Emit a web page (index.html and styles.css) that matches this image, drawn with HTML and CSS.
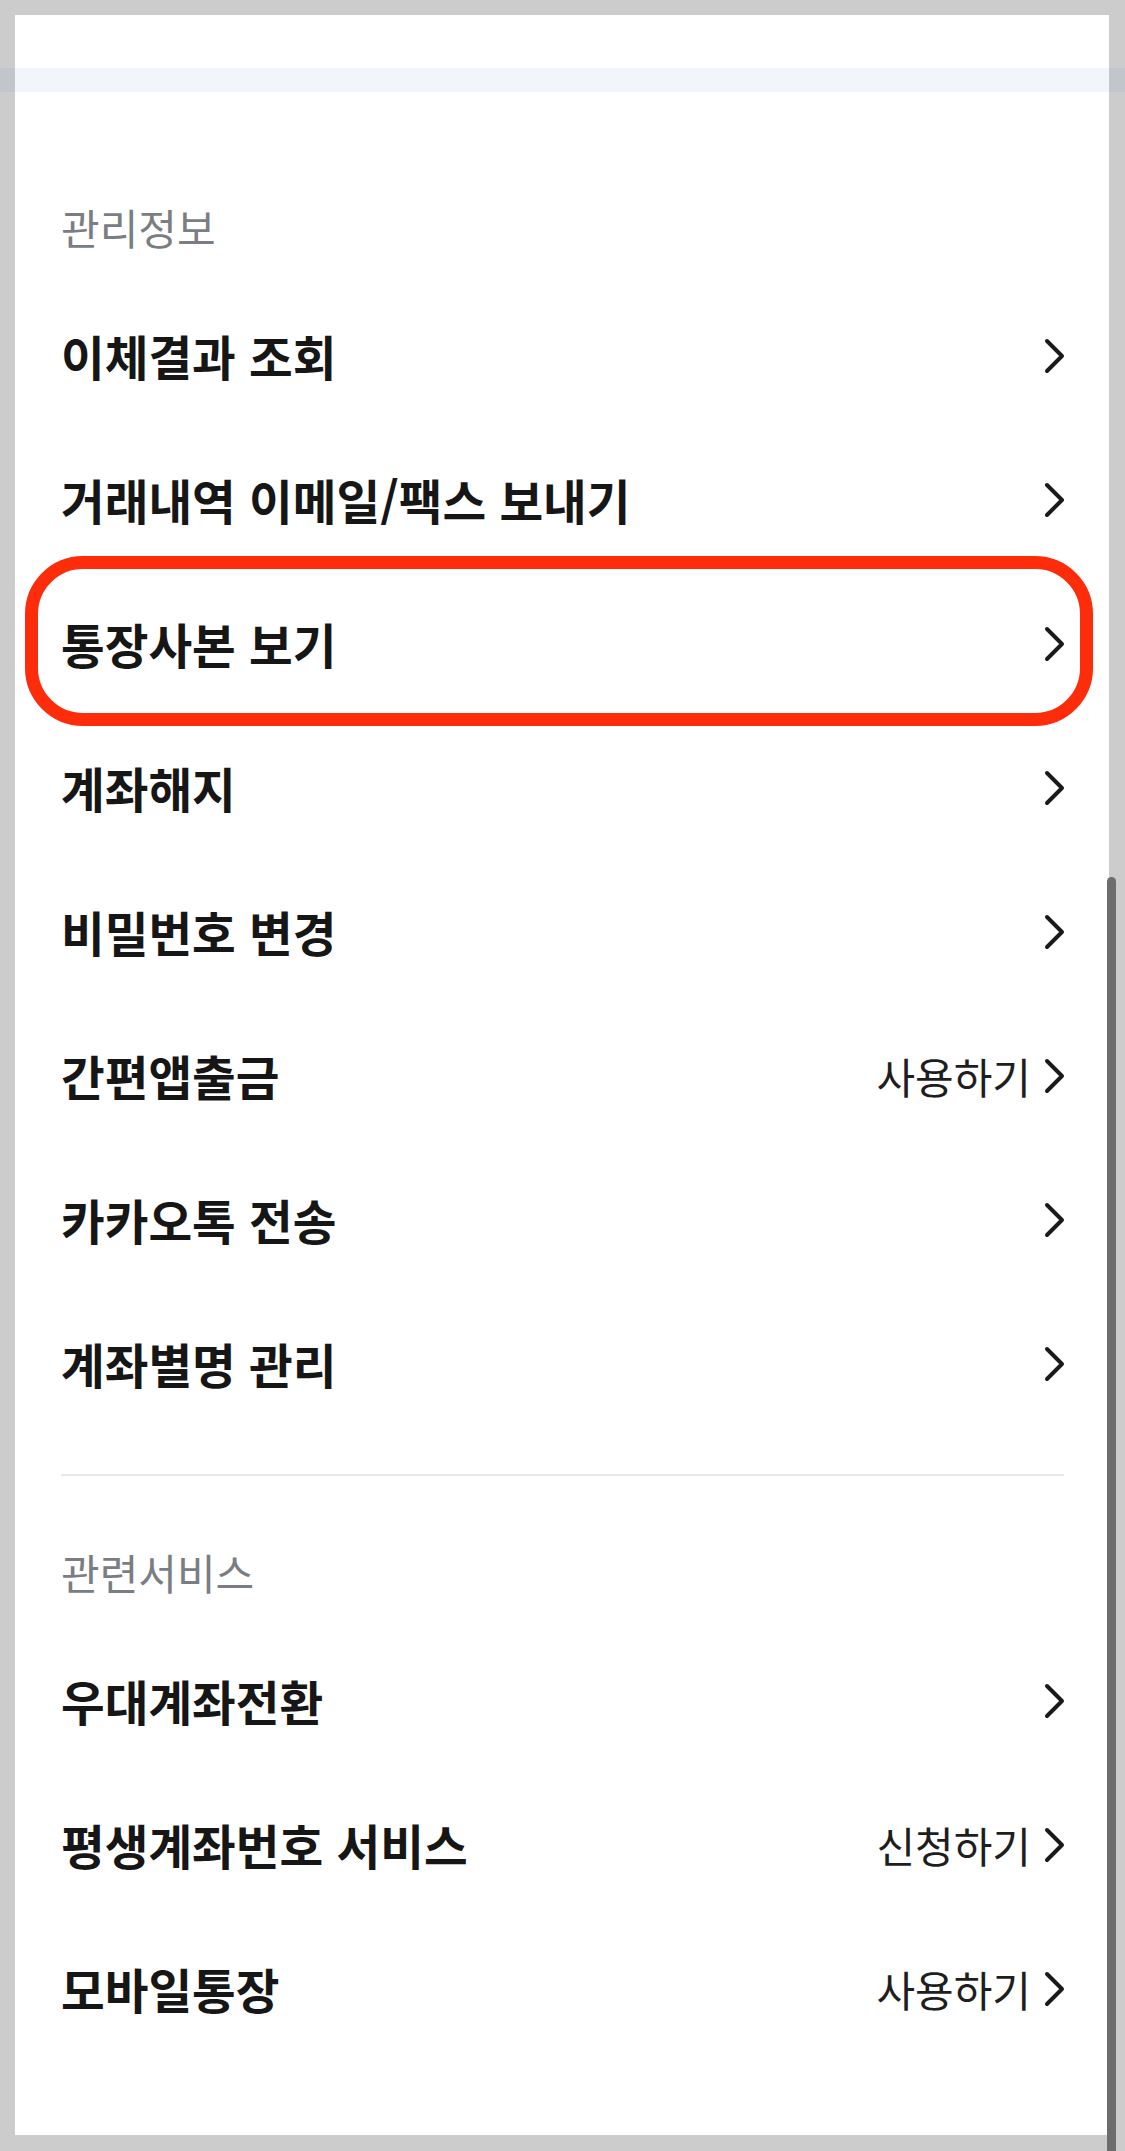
FILE: index.html
```html
<!DOCTYPE html>
<html lang="ko">
<head>
    <meta charset="UTF-8">
    <title>계좌 관리</title>
    <link rel="stylesheet" href="styles.css">
</head>
<body>
<div class="topShade"></div>
<div class="panel">
    <div class="section">
        <h3 class="sectionTitle">관리정보</h3>
        <ul class="menuList">
            <li class="menuItem"><span class="menuName">이체결과 조회</span><span class="menuSide"><svg class="arrow" viewBox="0 0 24 36"><path d="M4 3 L19 18 L4 33"/></svg></span></li>
            <li class="menuItem"><span class="menuName">거래내역 이메일/팩스 보내기</span><span class="menuSide"><svg class="arrow" viewBox="0 0 24 36"><path d="M4 3 L19 18 L4 33"/></svg></span></li>
            <li class="menuItem marked"><span class="menuName">통장사본 보기</span><span class="menuSide"><svg class="arrow" viewBox="0 0 24 36"><path d="M4 3 L19 18 L4 33"/></svg></span></li>
            <li class="menuItem"><span class="menuName">계좌해지</span><span class="menuSide"><svg class="arrow" viewBox="0 0 24 36"><path d="M4 3 L19 18 L4 33"/></svg></span></li>
            <li class="menuItem"><span class="menuName">비밀번호 변경</span><span class="menuSide"><svg class="arrow" viewBox="0 0 24 36"><path d="M4 3 L19 18 L4 33"/></svg></span></li>
            <li class="menuItem"><span class="menuName">간편앱출금</span><span class="menuSide">사용하기<svg class="arrow" viewBox="0 0 24 36"><path d="M4 3 L19 18 L4 33"/></svg></span></li>
            <li class="menuItem"><span class="menuName">카카오톡 전송</span><span class="menuSide"><svg class="arrow" viewBox="0 0 24 36"><path d="M4 3 L19 18 L4 33"/></svg></span></li>
            <li class="menuItem"><span class="menuName">계좌별명 관리</span><span class="menuSide"><svg class="arrow" viewBox="0 0 24 36"><path d="M4 3 L19 18 L4 33"/></svg></span></li>
        </ul>
    </div>
    <div class="divider"></div>
    <div class="section">
        <h3 class="sectionTitle">관련서비스</h3>
        <ul class="menuList">
            <li class="menuItem"><span class="menuName">우대계좌전환</span><span class="menuSide"><svg class="arrow" viewBox="0 0 24 36"><path d="M4 3 L19 18 L4 33"/></svg></span></li>
            <li class="menuItem"><span class="menuName">평생계좌번호 서비스</span><span class="menuSide">신청하기<svg class="arrow" viewBox="0 0 24 36"><path d="M4 3 L19 18 L4 33"/></svg></span></li>
            <li class="menuItem"><span class="menuName">모바일통장</span><span class="menuSide">사용하기<svg class="arrow" viewBox="0 0 24 36"><path d="M4 3 L19 18 L4 33"/></svg></span></li>
        </ul>
    </div>
</div>
<div class="scrollBar"></div>
</body>
</html>
```

FILE: styles.css
```css
*{
    margin: 0;
    padding: 0;
    box-sizing: border-box;
}
body{
    position: relative;
    background-color: #cccccc;
    padding: 15px 16px 16px 15px;
    font-family: "Noto Sans CJK KR", "Noto Sans", sans-serif;
    color: #161616;
}
.topShade{
    position: absolute;
    left: 0;
    right: 0;
    top: 68px;
    height: 24px;
    background-color: rgba(40, 80, 160, 0.06);
    z-index: 2;
}
.panel{
    background-color: #ffffff;
    height: 2120px;
    padding: 182px 45px 0 46px;
}
.sectionTitle{
    height: 60px;
    line-height: 60px;
    font-size: 42px;
    font-weight: normal;
    color: #7a7d82;
    margin-bottom: 27px;
}
ul.menuList{
    list-style: none;
}
.menuItem{
    position: relative;
    height: 144px;
    display: flex;
    align-items: center;
    justify-content: space-between;
}
.menuName{
    font-size: 47.5px;
    font-weight: bold;
    line-height: 1;
}
.menuSide{
    display: flex;
    align-items: center;
    font-size: 42px;
    line-height: 1;
    color: #1e1e1e;
}
.arrow{
    width: 24px;
    height: 36px;
    margin-left: 12px;
    margin-right: -3px;
}
.arrow path{
    fill: none;
    stroke: #1a1a1a;
    stroke-width: 4;
    stroke-linecap: round;
    stroke-linejoin: round;
}
.menuItem.marked::before{
    content: "";
    position: absolute;
    top: -16px;
    bottom: -10px;
    left: -36px;
    right: -29px;
    border: 13px solid #fd2c0b;
    border-radius: 58px;
}
.divider{
    height: 2px;
    background-color: #e8e8e8;
    margin: 38px 0 66px;
}
.scrollBar{
    position: absolute;
    left: 1107px;
    width: 9px;
    top: 877px;
    bottom: 0;
    background-color: #6d6d6d;
    border-radius: 5px 5px 0 0;
}
```
